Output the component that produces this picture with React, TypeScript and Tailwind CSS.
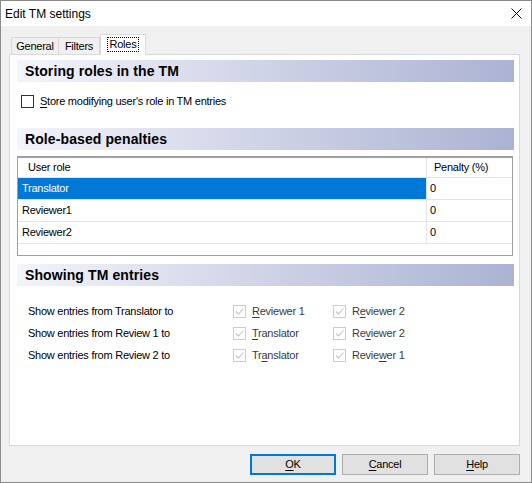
import React from 'react'

const font = "font-['Liberation_Sans',Arial,sans-serif]"

function U({ children }: { children: React.ReactNode }) {
  return <span className="underline underline-offset-[2px] decoration-[1px]">{children}</span>
}

function SectionHeader({ title }: { title: string }) {
  return (
    <div className="h-[22px] w-[497px] flex items-center pl-[8px] bg-linear-to-r from-[#f3f4fa] to-[#acb2d3]">
      <span className="text-[14px] font-bold text-black tracking-[0.1px]">{title}</span>
    </div>
  )
}

function DisabledCheck({ label }: { label: React.ReactNode }) {
  return (
    <div className="flex items-center w-[100px]">
      <span className="w-[13px] h-[13px] border border-[#cccccc] bg-white flex items-center justify-center">
        <svg width="11" height="11" viewBox="0 0 11 11">
          <path d="M2 5.5 L4.5 8 L9.5 2.5" fill="none" stroke="#c4c4c4" strokeWidth="1.1" />
        </svg>
      </span>
      <span className="ml-[6px] text-[#3a3a3a]">{label}</span>
    </div>
  )
}

const rows = [
  { name: 'Translator', value: '0', selected: true },
  { name: 'Reviewer1', value: '0', selected: false },
  { name: 'Reviewer2', value: '0', selected: false },
]

const visibility = [
  {
    text: 'Show entries from Translator to',
    a: <><U>R</U>eviewer 1</>,
    b: <>R<U>e</U>viewer 2</>,
  },
  {
    text: 'Show entries from Review 1 to',
    a: <><U>T</U>ranslator</>,
    b: <>Re<U>v</U>iewer 2</>,
  },
  {
    text: 'Show entries from Review 2 to',
    a: <>Tr<U>a</U>nslator</>,
    b: <>Revie<U>w</U>er 1</>,
  },
]

export default function App() {
  return (
    <div className={`w-[532px] h-[483px] border border-[#8a8a8a] bg-[#f0f0f0] flex flex-col text-[11px] tracking-[-0.25px] text-black ${font}`}>
      {/* title bar */}
      <div className="h-[25px] bg-white flex items-center justify-between pl-[4px] pr-[9px]">
        <span className="text-[12px] tracking-normal">Edit TM settings</span>
        <svg width="11" height="11" viewBox="0 0 11 11">
          <path d="M0.5 0.5 L10.5 10.5 M10.5 0.5 L0.5 10.5" stroke="#111" strokeWidth="1" />
        </svg>
      </div>

      {/* tabs */}
      <div className="mt-[8px] ml-[10px] h-[20px] flex items-end">
        <div className="w-[48px] h-[17px] border border-b-0 border-[#d9d9d9] bg-[#f0f0f0] flex items-center justify-center">
          General
        </div>
        <div className="w-[41px] h-[17px] border border-l-0 border-b-0 border-[#d9d9d9] bg-[#f0f0f0] flex items-center justify-center">
          Filters
        </div>
        <div className="relative z-10 -mb-px w-[46px] h-[21px] border border-b-0 border-[#d9d9d9] bg-white flex items-start justify-center pt-[2px]">
          <span className="border border-dotted border-black px-[2px] leading-[13px]">Roles</span>
        </div>
      </div>

      {/* tab panel */}
      <div className="ml-[8px] w-[511px] h-[392px] border border-[#d9d9d9] bg-white flex flex-col pl-[7px] pr-[5px] pt-[5px]">
        <SectionHeader title="Storing roles in the TM" />

        <div className="mt-[13px] ml-[4px] h-[13px] flex items-center">
          <span className="w-[13px] h-[13px] border border-[#333333] bg-white" />
          <span className="ml-[6px]">
            <U>S</U>tore modifying user's role in TM entries
          </span>
        </div>

        <div className="mt-[20px]">
          <SectionHeader title="Role-based penalties" />
        </div>

        {/* grid */}
        <div className="mt-[6px] w-[496px] h-[100px] border border-t-2 border-[#a0a0a0] bg-white flex flex-col">
          <div className="h-[20px] flex border-b border-[#e3e3e3]">
            <div className="w-[409px] flex items-center pl-[10px] border-r border-[#e3e3e3]">User role</div>
            <div className="flex-1 flex items-center pl-[7px]">Penalty (%)</div>
          </div>
          {rows.map((r) => (
            <div key={r.name} className="h-[22px] flex border-b border-[#e3e3f0]">
              <div
                className={`w-[409px] flex items-center pl-[4px] border-r border-[#e3e3f0] ${
                  r.selected ? 'bg-[#0078d7] text-white' : ''
                }`}
              >
                {r.name}
              </div>
              <div className="flex-1 flex items-center pl-[3px]">{r.value}</div>
            </div>
          ))}
        </div>

        <div className="mt-[8px]">
          <SectionHeader title="Showing TM entries" />
        </div>

        <div className="mt-[14px] flex flex-col pl-[11px]">
          {visibility.map((v) => (
            <div key={v.text} className="h-[22px] flex items-center">
              <span className="w-[205px]">{v.text}</span>
              <DisabledCheck label={v.a} />
              <DisabledCheck label={v.b} />
            </div>
          ))}
        </div>
      </div>

      {/* buttons */}
      <div className="mt-[8px] flex justify-end gap-[6px] pr-[11px]">
        <button className="w-[86px] h-[21px] border-2 border-[#0078d7] bg-[#e1e1e1] flex items-center justify-center">
          <U>O</U>K
        </button>
        <button className="w-[86px] h-[21px] border border-[#adadad] bg-[#e1e1e1] flex items-center justify-center">
          <U>C</U>ancel
        </button>
        <button className="w-[86px] h-[21px] border border-[#adadad] bg-[#e1e1e1] flex items-center justify-center">
          <U>H</U>elp
        </button>
      </div>
    </div>
  )
}
